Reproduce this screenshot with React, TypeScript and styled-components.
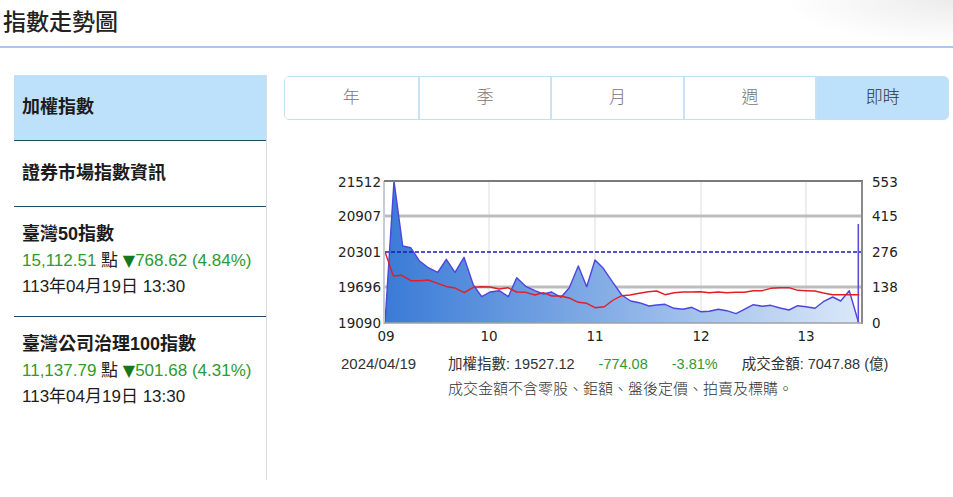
import styled, { createGlobalStyle } from "styled-components";

const GlobalStyle = createGlobalStyle`
  body {
    margin: 0;
    background: #fff;
    font-family: "Liberation Sans", "Noto Sans CJK TC", sans-serif;
    color: #222;
  }
`;

const PageHeader = styled.header`
  height: 46px;
  border-bottom: 2px solid #a9c8ee;
  display: flex;
  align-items: center;
  padding-left: 3px;
  background: radial-gradient(ellipse 170px 45px at 100% 0, #ececec, rgba(255, 255, 255, 0));
`;

const Title = styled.h1`
  margin: 0;
  font-family: "Noto Sans CJK TC", sans-serif;
  font-size: 23px;
  font-weight: 500;
  line-height: 28px;
  margin-top: -7px;
  color: #222;
`;

const Body = styled.div`
  display: flex;
  padding-top: 27px;
`;

const Sidebar = styled.nav`
  width: 253px;
  height: 405px;
  margin-left: 14px;
  border-right: 1px solid #dcdcdc;
  box-sizing: border-box;
`;

const NavItem = styled.div<{ $active?: boolean }>`
  height: 66px;
  box-sizing: border-box;
  display: flex;
  align-items: center;
  padding: 0 0 5px 8px;
  border-bottom: 1px solid #1f4a68;
  background: ${(p) => (p.$active ? "#bde0fb" : "transparent")};
  font-family: "Noto Sans CJK TC", sans-serif;
  font-size: 18px;
  font-weight: 700;
  color: #1c1c1c;
`;

const IndexItem = styled.div<{ $last?: boolean }>`
  padding: 14px 8px 16px;
  border-bottom: ${(p) => (p.$last ? "none" : "1px solid #1f4a68")};
  line-height: 27px;
`;

const IndexName = styled.div`
  font-size: 18px;
  font-weight: 700;
  color: #1c1c1c;
  margin-bottom: -1px;
`;

const Quote = styled.div`
  font-size: 17px;
  color: #2f9a2f;
  white-space: nowrap;
`;

const Unit = styled.span`
  color: #222;
`;

const Arrow = styled.span`
  color: #16781c;
  font-family: "DejaVu Sans", sans-serif;
  font-size: 16px;
`;

const Stamp = styled.div`
  font-size: 17px;
  color: #1c1c1c;
  margin-top: -1px;
`;

const Content = styled.main`
  width: 665px;
  margin-left: 17px;
`;

const Tabs = styled.div`
  margin-top: 1px;
  height: 44px;
  display: grid;
  grid-template-columns: repeat(5, 1fr);
  border: 1px solid #c4e0f4;
  border-radius: 5px;
  overflow: hidden;
  box-sizing: border-box;
`;

const Tab = styled.div<{ $active?: boolean }>`
  display: flex;
  align-items: center;
  justify-content: center;
  padding-bottom: 5px;
  font-family: "Noto Sans CJK TC", sans-serif;
  font-size: 17px;
  font-weight: 300;
  color: ${(p) => (p.$active ? "#333" : "#777")};
  background: ${(p) => (p.$active ? "#bde0fb" : "#fff")};
  & + & {
    border-left: 2px solid #c9e3f5;
  }
`;

const ChartBox = styled.div`
  margin-top: 48px;
  margin-left: 46px;
  width: 570px;
  height: 180px;
`;

const InfoRow = styled.div`
  display: flex;
  margin-left: 57px;
  margin-top: 5px;
`;

const DateCell = styled.div`
  width: 107px;
  font-size: 15px;
  line-height: 22px;
  color: #333;
`;

const InfoCol = styled.div`
  display: flex;
  flex-direction: column;
`;

const InfoLine = styled.div`
  display: flex;
  gap: 24px;
  font-size: 14.5px;
  line-height: 22px;
  color: #333;
  white-space: nowrap;
`;

const Change = styled.span`
  color: #2f9a2f;
`;

const Note = styled.div`
  font-family: "Noto Sans CJK TC", sans-serif;
  font-size: 15px;
  line-height: 26px;
  color: #333;
  font-weight: 300;
`;

const blue: [number, number][] = [
  [385, 323], [394, 181], [402.7, 246], [410.7, 247.7], [419.3, 260.7], [428.3, 267.7],
  [437.7, 272.3], [446.3, 259.3], [455, 272.3], [464, 257.3], [473.3, 285], [481.7, 296.7],
  [490, 292], [499.3, 290.7], [508.3, 296.7], [516.7, 277.7], [525.7, 286.3], [535, 290.7],
  [543.3, 294], [551.7, 292], [561, 297.3], [569.3, 287.7], [578.3, 266], [586.7, 286.7],
  [595, 260], [603.3, 268.3], [612.3, 281.7], [621.7, 295], [630.7, 301], [639.3, 302.7],
  [649, 306], [656.7, 305], [665, 304.3], [674, 308.3], [683.3, 309.3], [691.7, 307.3],
  [700.7, 311.7], [709.3, 311.3], [718.3, 309.3], [726.7, 310.7], [736, 313.7], [744.3, 309.3],
  [753.3, 304.7], [762.3, 306.3], [770.7, 305.3], [780, 308], [789, 310], [797.7, 305.7],
  [806, 306.7], [815, 308.3], [823.3, 301.7], [832.7, 297], [840.7, 301], [849.3, 290.7],
  [858.3, 321.7],
];

const red: [number, number][] = [
  [385, 251.7], [393.3, 276], [401.7, 275.3], [411, 280.7], [420, 280.7], [428.3, 280],
  [437.7, 283.3], [446.7, 286.7], [455, 288], [464.3, 292.7], [473.3, 287.3], [481.7, 286.7],
  [490, 287], [499.3, 289], [507.7, 287.7], [516.7, 292], [525.7, 292.3], [535, 295],
  [543.3, 292.7], [551.7, 296], [561, 296], [570, 298.3], [578.3, 302.3], [586.7, 303.3],
  [595, 307.7], [604.3, 306.7], [613.3, 300], [621.7, 295.7], [630, 295], [639.3, 293.3],
  [648.3, 291.7], [656.7, 291], [665, 294.7], [674, 292.7], [683.3, 292], [691.7, 292],
  [700.7, 291.7], [709.3, 292.7], [718.3, 292], [726.7, 292.7], [736, 292.3], [744.3, 292.3],
  [753.3, 290.7], [762.3, 290.7], [770.7, 288.3], [780, 287.7], [789, 287.7], [797.7, 290.3],
  [806, 290.7], [815, 291], [823.3, 293], [832.7, 294.7], [840.7, 294.7], [849.3, 294.7],
  [859.3, 294.7],
];

const pts = (a: [number, number][]) => a.map(([x, y]) => `${x},${y}`).join(" ");

const leftTicks = [
  { y: 182, v: "21512" },
  { y: 216, v: "20907" },
  { y: 252, v: "20301" },
  { y: 287, v: "19696" },
  { y: 323, v: "19090" },
];
const rightTicks = [
  { y: 182, v: "553" },
  { y: 216, v: "415" },
  { y: 252, v: "276" },
  { y: 287, v: "138" },
  { y: 323, v: "0" },
];
const hours = [
  { x: 386, v: "09" },
  { x: 489, v: "10" },
  { x: 595, v: "11" },
  { x: 701, v: "12" },
  { x: 806, v: "13" },
];

const TrendChart = () => (
  <svg width="570" height="180" viewBox="330 168 570 180" fontFamily="DejaVu Sans, sans-serif">
    <defs>
      <linearGradient id="area" x1="385" y1="0" x2="860" y2="0" gradientUnits="userSpaceOnUse">
        <stop offset="0" stopColor="#3a7bd6" />
        <stop offset="1" stopColor="#dbe8f8" />
      </linearGradient>
    </defs>
    {hours.slice(1).map((h) => (
      <line key={h.x} x1={h.x} y1={182} x2={h.x} y2={323} stroke="#dcdcdc" strokeWidth="1" />
    ))}
    <line x1="385" y1="216" x2="862" y2="216" stroke="#bdbdbd" strokeWidth="3" />
    <line x1="385" y1="287" x2="862" y2="287" stroke="#bdbdbd" strokeWidth="3" />
    <polygon points={`${pts(blue)} 858.3,323`} fill="url(#area)" />
    <line x1="385" y1="252" x2="862" y2="252" stroke="#1a1ab8" strokeWidth="1.3" strokeDasharray="4 2" />
    <polyline points={pts(blue)} fill="none" stroke="#4d45dc" strokeWidth="1.4" strokeLinejoin="round" />
    <line x1="858.3" y1="323" x2="858.3" y2="224" stroke="#5a4de6" strokeWidth="1.6" />
    <polyline points={pts(red)} fill="none" stroke="#e01f28" strokeWidth="1.4" strokeLinejoin="round" />
    <line x1="384" y1="181" x2="384" y2="324" stroke="#c8ccd4" strokeWidth="2" />
    <line x1="384" y1="181" x2="863" y2="181" stroke="#7a7a7a" strokeWidth="1.8" />
    <line x1="862" y1="181" x2="862" y2="324" stroke="#8a8a8a" strokeWidth="2" />
    <line x1="384" y1="323" x2="863" y2="323" stroke="#a0a0a0" strokeWidth="1.5" />
    {leftTicks.map((t) => (
      <text key={t.v} x="381" y={t.y + 5} textAnchor="end" fontSize="13.5" fill="#222">
        {t.v}
      </text>
    ))}
    {rightTicks.map((t) => (
      <text key={t.v} x="872" y={t.y + 5} fontSize="13.5" fill="#222">
        {t.v}
      </text>
    ))}
    {hours.map((h) => (
      <text key={h.v} x={h.x} y="341" textAnchor="middle" fontSize="13.5" fill="#222">
        {h.v}
      </text>
    ))}
  </svg>
);

const indices = [
  { name: "臺灣50指數", price: "15,112.51", diff: "768.62", pct: "4.84%" },
  { name: "臺灣公司治理100指數", price: "11,137.79", diff: "501.68", pct: "4.31%" },
];

const tabs = ["年", "季", "月", "週", "即時"];

export default function App() {
  return (
    <>
      <GlobalStyle />
      <PageHeader>
        <Title>指數走勢圖</Title>
      </PageHeader>
      <Body>
        <Sidebar>
          <NavItem $active>加權指數</NavItem>
          <NavItem>證券市場指數資訊</NavItem>
          {indices.map((ix, i) => (
            <IndexItem key={ix.name} $last={i === indices.length - 1}>
              <IndexName>{ix.name}</IndexName>
              <Quote>
                {ix.price} <Unit>點</Unit> <Arrow>▼</Arrow>
                {ix.diff} ({ix.pct})
              </Quote>
              <Stamp>113年04月19日 13:30</Stamp>
            </IndexItem>
          ))}
        </Sidebar>
        <Content>
          <Tabs>
            {tabs.map((t) => (
              <Tab key={t} $active={t === "即時"}>
                {t}
              </Tab>
            ))}
          </Tabs>
          <ChartBox>
            <TrendChart />
          </ChartBox>
          <InfoRow>
            <DateCell>2024/04/19</DateCell>
            <InfoCol>
              <InfoLine>
                <span>加權指數: 19527.12</span>
                <Change>-774.08</Change>
                <Change>-3.81%</Change>
                <span>成交金額: 7047.88 (億)</span>
              </InfoLine>
              <Note>成交金額不含零股、鉅額、盤後定價、拍賣及標購。</Note>
            </InfoCol>
          </InfoRow>
        </Content>
      </Body>
    </>
  );
}
